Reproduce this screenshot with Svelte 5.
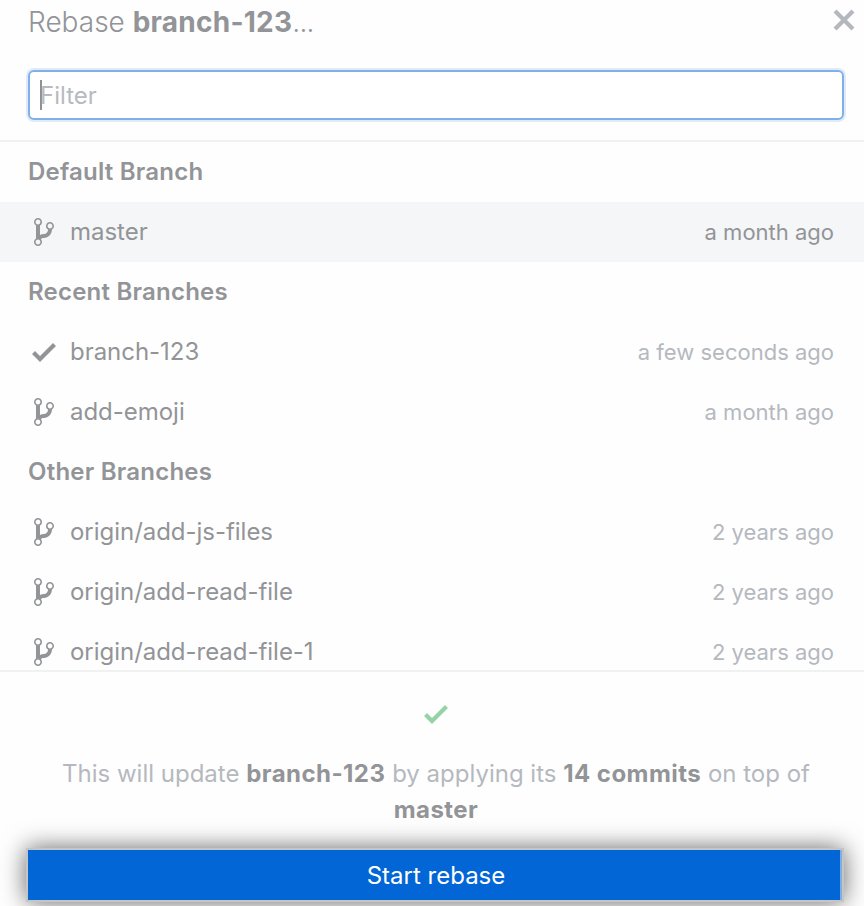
<script>
  const groups = [
    { title: 'Default Branch', branches: [{ name: 'master', date: 'a month ago', selected: true }] },
    {
      title: 'Recent Branches',
      branches: [
        { name: 'branch-123', date: 'a few seconds ago', current: true },
        { name: 'add-emoji', date: 'a month ago' },
      ],
    },
    {
      title: 'Other Branches',
      branches: [
        { name: 'origin/add-js-files', date: '2 years ago' },
        { name: 'origin/add-read-file', date: '2 years ago' },
        { name: 'origin/add-read-file-1', date: '2 years ago' },
      ],
    },
  ];
</script>

{#snippet check()}
  <svg width="24" height="32" viewBox="0 0 12 16"><path d="M12 5l-8 8-4-4 1.5-1.5L4 10l6.5-6.5L12 5z" /></svg>
{/snippet}

{#snippet gitBranch()}
  <svg width="20" height="32" viewBox="0 0 10 16"><path fill-rule="evenodd" d="M10 5c0-1.11-.89-2-2-2a1.993 1.993 0 0 0-1 3.72v.3c-.02.52-.23.98-.63 1.38-.4.4-.86.61-1.38.63-.83.02-1.48.16-2 .45V4.72a1.993 1.993 0 0 0-1-3.72C.88 1 0 1.89 0 3a2 2 0 0 0 1 1.72v6.56c-.59.35-1 .99-1 1.72 0 1.11.89 2 2 2 1.11 0 2-.89 2-2 0-.53-.2-1-.53-1.36.09-.06.48-.41.59-.47.25-.11.56-.17.94-.17 1.05-.05 1.95-.45 2.75-1.25S8.95 7.77 9 6.73h-.02C9.59 6.37 10 5.73 10 5zM2 1.8c.66 0 1.2.55 1.2 1.2 0 .65-.55 1.2-1.2 1.2C1.35 4.2.8 3.65.8 3c0-.65.55-1.2 1.2-1.2zm0 12.41c-.66 0-1.2-.55-1.2-1.2 0-.65.55-1.2 1.2-1.2.65 0 1.2.55 1.2 1.2 0 .65-.55 1.2-1.2 1.2zm6-8c-.66 0-1.2-.55-1.2-1.2 0-.65.55-1.2 1.2-1.2.65 0 1.2.55 1.2 1.2 0 .65-.55 1.2-1.2 1.2z" /></svg>
{/snippet}

<div class="dialog">
  <header>
    <h1>Rebase <strong>branch-123</strong><span class="dots">...</span></h1>
    <button class="close" aria-label="Close">
      <svg width="24" height="32" viewBox="0 0 12 16"><path d="M7.48 8l3.75 3.75-1.48 1.48L6 9.48l-3.75 3.75-1.48-1.48L4.52 8 .77 4.25l1.48-1.48L6 6.52l3.75-3.75 1.48 1.48L7.48 8z" /></svg>
    </button>
  </header>
  <div class="filter"><i class="caret"></i><span>Filter</span></div>
  <div class="list">
    {#each groups as group}
      <h2>{group.title}</h2>
      {#each group.branches as branch}
        <div class="row" class:selected={branch.selected}>
          <span class="icon">{#if branch.current}{@render check()}{:else}{@render gitBranch()}{/if}</span>
          <span class="name">{branch.name}</span>
          <span class="date">{branch.date}</span>
        </div>
      {/each}
    {/each}
  </div>
  <footer>
    <div class="status">{@render check()}</div>
    <p>This will update <strong>branch-123</strong> by applying its <strong>14 commits</strong> on top of <strong>master</strong></p>
    <button class="start">Start rebase</button>
  </footer>
</div>

<style>
  :global(body) { margin: 0; overflow: hidden; background: #fefefe; }
  .dialog {
    box-sizing: border-box; width: 864px; height: 906px; overflow: hidden;
    display: flex; flex-direction: column;
    background: #fefefe; color: #929497;
    font: 400 24px 'Inter', sans-serif;
  }
  svg { display: block; fill: currentColor; }
  button { border: 0; padding: 0; margin: 0; font: inherit; background: none; }
  header { display: flex; justify-content: space-between; height: 70px; padding: 0 8px 0 28px; flex: none; }
  h1 { margin: 0; padding-top: 2px; font-size: 28px; line-height: 40px; font-weight: 300; }
  h1 strong { font-weight: 700; letter-spacing: 0.25px; }
  .dots { letter-spacing: -0.8px; }
  .close { height: 32px; margin-top: 4px; color: #b4b8be; }
  .filter {
    box-sizing: border-box; flex: none; height: 50px; margin: 0 20px 20px 28px; padding-left: 10px;
    display: flex; align-items: center; border: 2px solid #7fb1e9; border-radius: 6px;
    box-shadow: 0 0 0 2px #dfebf9; color: #b7bbc0; background: #fff;
  }
  .caret { width: 2px; height: 30px; margin-right: -2px; background: #8f9194; }
  .list { flex: none; box-sizing: border-box; height: 532px; overflow: hidden; border-top: 2px solid #f0f1f1; border-bottom: 2px solid #f0f1f1; }
  h2 { margin: 0; padding-left: 28px; font-size: 24px; line-height: 60px; font-weight: 600; letter-spacing: 0.22px; }
  .row { display: flex; align-items: center; height: 60px; padding: 0 30px 0 28px; }
  .selected { background: #f5f6f8; }
  .icon { width: 32px; margin-right: 10px; display: flex; justify-content: center; }
  .name { flex: 1; padding-bottom: 2px; letter-spacing: -0.03px; }
  .date { font-size: 22px; color: #b5b9be; padding-bottom: 1px; }
  .selected .date { color: #929497; }
  footer { display: flex; flex-direction: column; flex: none; padding: 26px 22px 0 28px; }
  .status { display: flex; justify-content: center; color: #94d3a6; padding-left: 2px; }
  p { margin: 26px 0 0; padding-left: 2px; line-height: 36px; text-align: center; color: #b5b9be; height: 94px; }
  p strong { color: #929497; font-weight: 700; letter-spacing: 0.45px; }
  .start {
    box-sizing: border-box; width: 814px; height: 50px; padding-left: 4px; background: #0366d6; color: #fff;
    border-right: 2px solid #81aee2;
    box-shadow: 0 0 0 2px #c5c5c5, 0 0 24px 2px rgba(0, 0, 0, 0.6);
  }
</style>
